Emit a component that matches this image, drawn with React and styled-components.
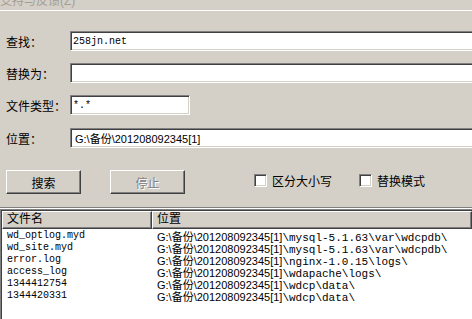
import React from 'react';
import styled, { createGlobalStyle } from 'styled-components';

const colors = {
  face: '#d4d0c8',
  shadow: '#808080',
  dark: '#404040',
  light: '#ffffff',
  text: '#000000',
  disabled: '#808080',
};

const cjk = '"Liberation Sans", "Noto Sans CJK SC", sans-serif';
const mono = '"Liberation Mono", "Noto Sans CJK SC", monospace';

const GlobalStyle = createGlobalStyle`
  html, body {
    margin: 0;
    padding: 0;
    background: ${colors.face};
    overflow: hidden;
  }
`;

const Window = styled.div`
  width: 472px;
  height: 319px;
  background: ${colors.face};
  overflow: hidden;
  display: flex;
  flex-direction: column;
  font-family: ${cjk};
  color: ${colors.text};
`;

const TitleStrip = styled.div`
  height: 10px;
  border-bottom: 1px solid ${colors.light};
  overflow: hidden;
  flex-shrink: 0;
`;

const TitleText = styled.div`
  margin-top: -5px;
  font-size: 12px;
  line-height: 13px;
  color: #a29e96;
`;

const Form = styled.div`
  display: flex;
  flex-direction: column;
  gap: 12px;
  padding-top: 20px;
`;

const FieldRow = styled.div`
  display: flex;
  align-items: center;
  height: 20px;
  margin-top: ${(p) => p.$nudge || 0}px;
`;

const Label = styled.div`
  box-sizing: border-box;
  width: 70px;
  flex-shrink: 0;
  padding-left: 6px;
  font-size: 12px;
  white-space: nowrap;
`;

const TextBox = styled.div`
  box-sizing: border-box;
  width: ${(p) => p.$width}px;
  height: 20px;
  flex-shrink: 0;
  background: ${colors.light};
  border-top: 1px solid ${colors.shadow};
  border-left: 1px solid ${colors.shadow};
  border-bottom: 1px solid ${colors.light};
  border-right: 1px solid ${colors.light};
  box-shadow: inset 1px 1px 0 ${colors.dark}, inset -1px -1px 0 ${colors.face};
  padding-left: ${(p) => (p.$sans ? 4 : 2)}px;
  display: flex;
  align-items: center;
  font-family: ${(p) => (p.$sans ? cjk : mono)};
  font-size: ${(p) => (p.$sans ? 11 : 10)}px;
  white-space: nowrap;
`;

const ActionRow = styled.div`
  display: flex;
  align-items: center;
  margin-top: 22px;
  padding-left: 6px;
  height: 24px;
`;

const Button = styled.div`
  box-sizing: border-box;
  width: 75px;
  height: 24px;
  flex-shrink: 0;
  margin-right: ${(p) => p.$gap || 0}px;
  display: flex;
  align-items: center;
  justify-content: center;
  font-size: 12px;
  background: ${colors.face};
  border-top: 1px solid ${colors.light};
  border-left: 1px solid ${colors.light};
  border-bottom: 1px solid ${colors.dark};
  border-right: 1px solid ${colors.dark};
  box-shadow: inset -1px -1px 0 ${colors.shadow};
  color: ${(p) => (p.$disabled ? colors.disabled : colors.text)};
  text-shadow: ${(p) => (p.$disabled ? `1px 1px 0 ${colors.light}` : 'none')};
`;

const CheckOption = styled.div`
  display: flex;
  align-items: center;
  margin-right: ${(p) => p.$gap || 0}px;
  font-size: 12px;
  margin-top: -3px;
`;

const CheckBox = styled.span`
  box-sizing: border-box;
  width: 13px;
  height: 13px;
  flex-shrink: 0;
  margin-right: 5px;
  background: ${colors.light};
  border-top: 1px solid ${colors.shadow};
  border-left: 1px solid ${colors.shadow};
  border-bottom: 1px solid ${colors.light};
  border-right: 1px solid ${colors.light};
  box-shadow: inset 1px 1px 0 ${colors.dark}, inset -1px -1px 0 ${colors.face};
`;

const Divider = styled.div`
  margin-top: 13px;
  height: 0;
  border-top: 1px solid ${colors.shadow};
  border-bottom: 1px solid ${colors.light};
`;

const ResultList = styled.div`
  flex: 1;
  background: ${colors.light};
  border-top: 1px solid ${colors.shadow};
  border-left: 1px solid ${colors.shadow};
  box-shadow: inset 1px 1px 0 ${colors.dark};
  padding: 1px 0 0 1px;
  display: flex;
  flex-direction: column;
`;

const HeaderRow = styled.div`
  display: grid;
  grid-template-columns: 150px 1fr;
  height: 18px;
  margin-bottom: 1px;
`;

const HeaderCell = styled.div`
  box-sizing: border-box;
  background: ${colors.face};
  border-top: 1px solid ${colors.light};
  border-left: 1px solid ${colors.light};
  border-bottom: 1px solid ${colors.dark};
  border-right: 1px solid ${colors.dark};
  box-shadow: inset -1px -1px 0 ${colors.shadow};
  padding-left: 4px;
  font-size: 12px;
  line-height: 15px;
`;

const Row = styled.div`
  display: grid;
  grid-template-columns: 150px 1fr;
  height: 12px;
  line-height: 12px;
  white-space: nowrap;
`;

const NameCell = styled.div`
  padding-left: 5px;
  font-family: ${mono};
  font-size: 10px;
`;

const PathCell = styled.div`
  padding-left: 5px;
`;

const PathBase = styled.span`
  font-family: ${cjk};
  font-size: 11px;
`;

const PathTail = styled.span`
  font-family: ${mono};
  font-size: 11px;
`;

const base = 'G:\\备份\\201208092345[1]';

const results = [
  { name: 'wd_optlog.myd', tail: '\\mysql-5.1.63\\var\\wdcpdb\\' },
  { name: 'wd_site.myd', tail: '\\mysql-5.1.63\\var\\wdcpdb\\' },
  { name: 'error.log', tail: '\\nginx-1.0.15\\logs\\' },
  { name: 'access_log', tail: '\\wdapache\\logs\\' },
  { name: '1344412754', tail: '\\wdcp\\data\\' },
  { name: '1344420331', tail: '\\wdcp\\data\\' },
];

const App = () => (
  <>
    <GlobalStyle />
    <Window>
      <TitleStrip>
        <TitleText>支持与反馈(Z)</TitleText>
      </TitleStrip>
      <Form>
        <FieldRow>
          <Label>查找：</Label>
          <TextBox $width={410}>258jn.net</TextBox>
        </FieldRow>
        <FieldRow>
          <Label>替换为：</Label>
          <TextBox $width={410} />
        </FieldRow>
        <FieldRow>
          <Label>文件类型：</Label>
          <TextBox $width={120}>*.*</TextBox>
        </FieldRow>
        <FieldRow $nudge={1}>
          <Label>位置：</Label>
          <TextBox $width={410} $sans>
            {base}
          </TextBox>
        </FieldRow>
      </Form>
      <ActionRow>
        <Button $gap={29}>搜索</Button>
        <Button $gap={69} $disabled>
          停止
        </Button>
        <CheckOption $gap={27}>
          <CheckBox />
          区分大小写
        </CheckOption>
        <CheckOption>
          <CheckBox />
          替换模式
        </CheckOption>
      </ActionRow>
      <Divider />
      <ResultList>
        <HeaderRow>
          <HeaderCell>文件名</HeaderCell>
          <HeaderCell>位置</HeaderCell>
        </HeaderRow>
        {results.map((r) => (
          <Row key={r.name}>
            <NameCell>{r.name}</NameCell>
            <PathCell>
              <PathBase>{base}</PathBase>
              <PathTail>{r.tail}</PathTail>
            </PathCell>
          </Row>
        ))}
      </ResultList>
    </Window>
  </>
);

export default App;
